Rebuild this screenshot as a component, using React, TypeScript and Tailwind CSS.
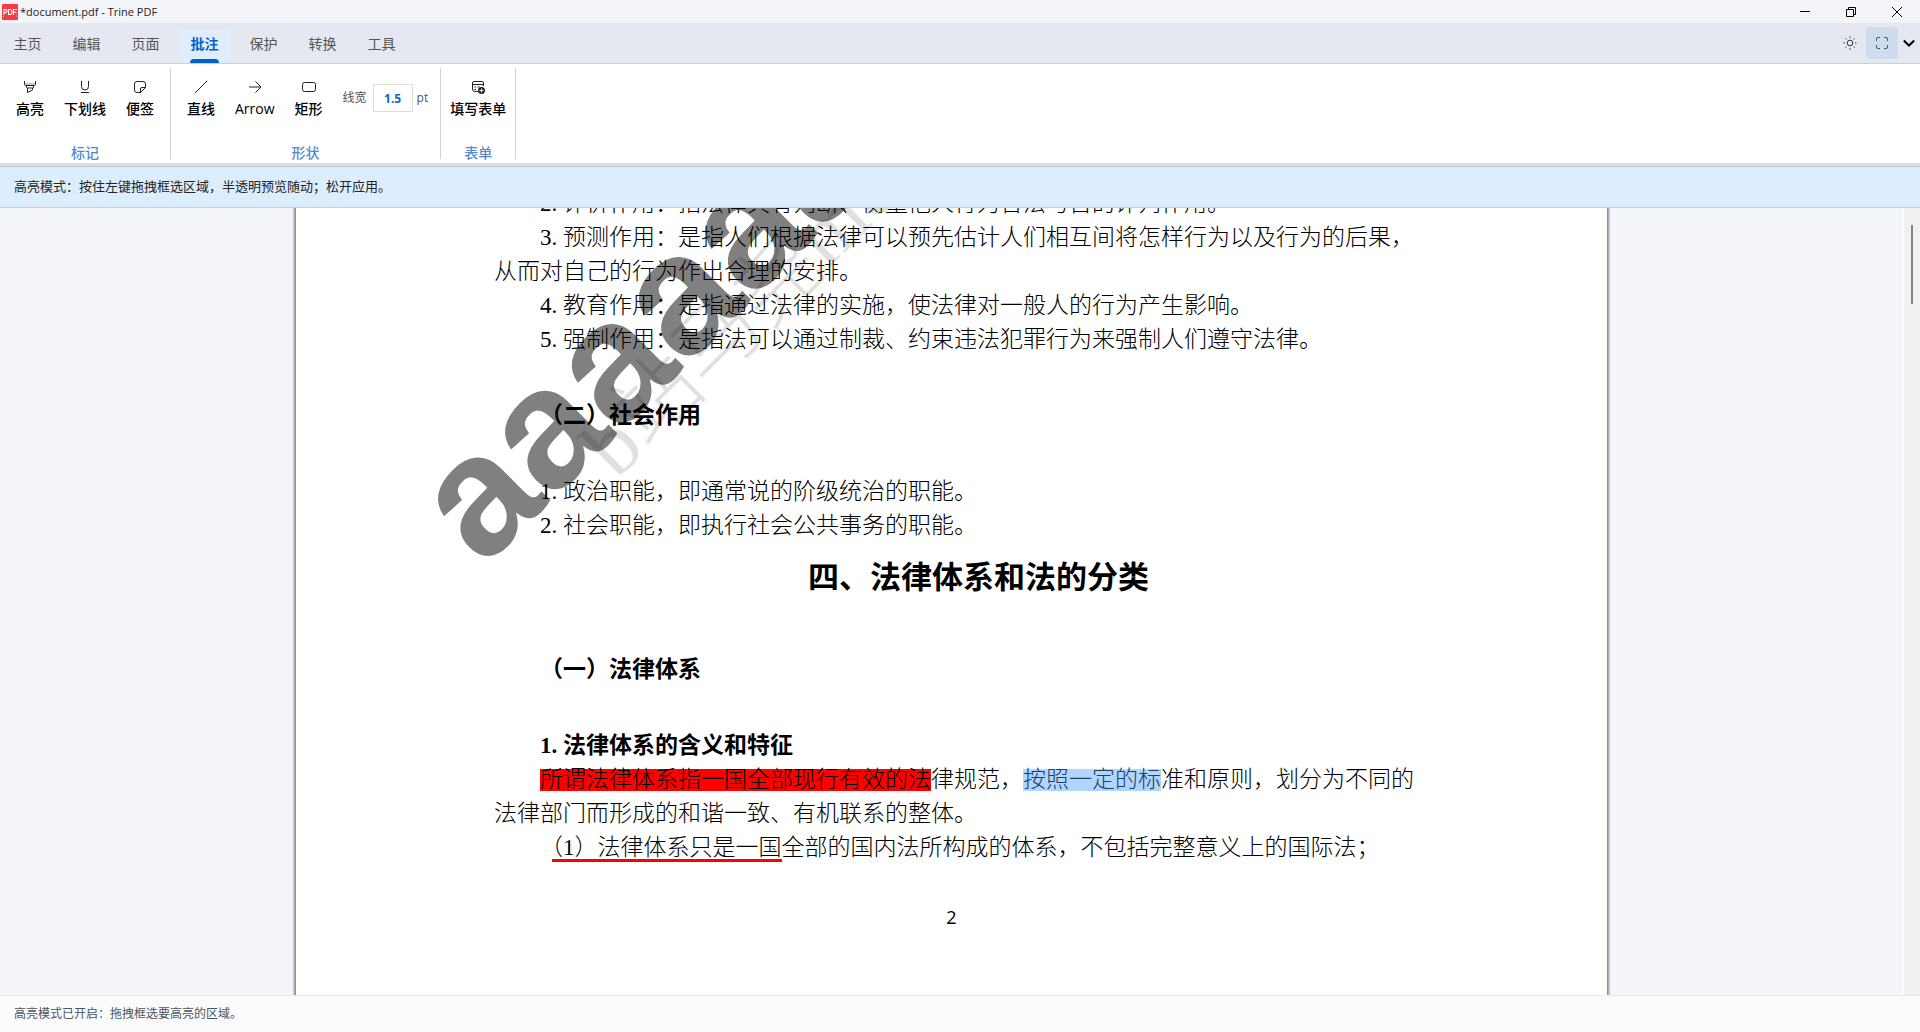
import React, { useState } from 'react';

type IconProps = { className?: string };

const AppIcon = () => (
  <svg viewBox="0 0 16 16" className="size-4 shrink-0" aria-hidden="true">
    <rect width="16" height="16" rx="1" fill="#fb3b41" />
    <g fill="none" stroke="#fff" strokeWidth="1.1">
      <path d="M2 11V5.500h1.500a1.400 1.400 0 0 1 0 3.200H2" />
      <path d="M6.600 5.500v5h1a2.500 2.500 0 0 0 0-5z" />
      <path d="M11.500 11V5.500H15M11.500 8.300h3" />
    </g>
    <path d="M1 12.500h1M14 12h1" stroke="#9ee6ff" />
  </svg>
);

const HighlighterIcon = ({ className }: IconProps) => (
  <svg viewBox="0 0 16 16" className={className} fill="none" stroke="currentColor" strokeWidth="1" aria-hidden="true">
    <path d="M2.500 2v3.500c0 .6.400 1 1 1h9c.6 0 1-.4 1-1V2" />
    <path d="M3 5h10" strokeOpacity=".5" />
    <path d="M4.500 6.500V8c0 .6.400 1 1 1h5c.6 0 1-.4 1-1V6.500M5.500 9v4.500l5-2.500V9" />
  </svg>
);

const UnderlineIcon = ({ className }: IconProps) => (
  <svg viewBox="0 0 16 16" className={className} fill="none" stroke="currentColor" strokeWidth="1" aria-hidden="true">
    <path d="M4.500 2v5.500a3.500 3.500 0 0 0 7 0V2M4 13.500h8" />
  </svg>
);

const NoteIcon = ({ className }: IconProps) => (
  <svg viewBox="0 0 16 16" className={className} fill="none" stroke="currentColor" strokeWidth="1" aria-hidden="true">
    <path d="M8.500 13.500H5A2.500 2.500 0 0 1 2.500 11V5A2.500 2.500 0 0 1 5 2.500h6A2.500 2.500 0 0 1 13.500 5v3.500zM13.500 8.500H10A1.500 1.500 0 0 0 8.500 10v3.500" />
  </svg>
);

const LineIcon = ({ className }: IconProps) => (
  <svg viewBox="0 0 16 16" className={className} fill="none" stroke="currentColor" strokeWidth="1" aria-hidden="true">
    <path d="M2 14 14 2" />
  </svg>
);

const ArrowIcon = ({ className }: IconProps) => (
  <svg viewBox="0 0 16 16" className={className} fill="none" stroke="currentColor" strokeWidth="1" aria-hidden="true">
    <path d="M2 8h12M8.500 2.500 14 8l-5.500 5.500" />
  </svg>
);

const RectIcon = ({ className }: IconProps) => (
  <svg viewBox="0 0 16 16" className={className} fill="none" stroke="currentColor" strokeWidth="1" aria-hidden="true">
    <rect x="1.500" y="3.500" width="13" height="9" rx="2" />
  </svg>
);

const FormIcon = ({ className }: IconProps) => (
  <svg viewBox="0 0 16 16" className={className} fill="none" stroke="currentColor" strokeWidth="1" aria-hidden="true">
    <path d="M8 12.500H5A2.500 2.500 0 0 1 2.500 10V4A1.500 1.500 0 0 1 4 2.500h8A1.500 1.500 0 0 1 13.500 4v3M2.500 5.500h11M4.500 8h1.500M7.500 8h2M4.500 10.500h1.500" />
    <circle cx="11.500" cy="11.500" r="3.500" fill="currentColor" stroke="none" />
    <path d="M11.500 9.500v4M9.500 11.500h4" stroke="#fff" />
  </svg>
);

const SunIcon = () => (
  <svg viewBox="0 0 16 16" className="size-4" fill="none" stroke="#333" aria-hidden="true">
    <circle cx="8" cy="8" r="2.800" />
    <path d="M8 1.500v1.500M8 13v1.500M1.500 8H3M13 8h1.500M3.400 3.400l1.100 1.100M11.500 11.500l1.100 1.100M3.400 12.600l1.100-1.100M11.500 4.500l1.100-1.100" />
  </svg>
);

const FullscreenIcon = () => (
  <svg viewBox="0 0 16 16" className="size-4" fill="none" stroke="#4b5563" aria-hidden="true">
    <path d="M2.500 6V4A1.500 1.500 0 0 1 4 2.500h2M10 2.500h2A1.500 1.500 0 0 1 13.500 4v2M13.500 10v2a1.500 1.500 0 0 1-1.500 1.500h-2M6 13.500H4A1.500 1.500 0 0 1 2.500 12v-2" />
  </svg>
);

const TABS = ['主页', '编辑', '页面', '批注', '保护', '转换', '工具'];

function TitleBar() {
  return (
    <header className="flex h-[23px] shrink-0 items-center bg-[#f4f5f8] pl-0.5 text-black">
      <AppIcon />
      <h1 className="pl-0.5 text-[11px] leading-4 text-[#1b1b1b]">*document.pdf - Trine PDF</h1>
      <div className="ml-auto flex h-full">
        <button aria-label="最小化" className="flex w-[46px] items-center justify-center">
          <svg viewBox="0 0 10 10" className="size-2.5" stroke="#000"><path d="M0 4.500h10" /></svg>
        </button>
        <button aria-label="还原" className="flex w-[46px] items-center justify-center">
          <svg viewBox="0 0 10 10" className="size-2.5" fill="none" stroke="#000"><path d="M.5 2.500h7v7h-7zM2.500 2.500v-2h7v7h-2" /></svg>
        </button>
        <button aria-label="关闭" className="flex w-[46px] items-center justify-center">
          <svg viewBox="0 0 10 10" className="size-2.5" stroke="#000"><path d="M0 0l10 10M10 0 0 10" /></svg>
        </button>
      </div>
    </header>
  );
}

function TabBar({ active, onSelect }: { active: string; onSelect: (t: string) => void }) {
  return (
    <nav className="flex h-[41px] shrink-0 items-end border-b border-[#b9d3ea] bg-[#e5e8f0] pl-px">
      <div className="flex gap-1.5">
        {TABS.map((t) => (
          <button
            key={t}
            onClick={() => onSelect(t)}
            className={
              t === active
                ? 'flex h-[34px] w-[53px] flex-col items-center rounded-t-md bg-[#e0eefb] text-[14px] font-bold text-[#0062cc]'
                : 'flex h-[34px] w-[53px] flex-col items-center text-[14px] text-[#555]'
            }
          >
            <span className="flex h-[30px] items-center leading-5">{t}</span>
            {t === active && <span className="h-1 w-[29px] rounded-t-sm bg-[#0062cc]" />}
          </button>
        ))}
      </div>
      <div className="ml-auto flex h-full items-center">
        <button aria-label="主题" className="flex size-8 items-center justify-center"><SunIcon /></button>
        <button aria-label="全屏" className="flex size-8 items-center justify-center rounded bg-[#cfdcee]"><FullscreenIcon /></button>
        <button aria-label="收起功能区" className="flex h-8 w-[22px] items-center justify-center">
          <svg viewBox="0 0 12 8" className="h-2 w-3" fill="none" stroke="#000" strokeWidth="2"><path d="M.8 1.500 6 6.500l5.200-5" /></svg>
        </button>
      </div>
    </nav>
  );
}

function Tool({ label, Icon }: { label: string; Icon: (p: IconProps) => React.JSX.Element }) {
  return (
    <button className="flex flex-col items-center gap-1 px-2 pt-[11px] text-black">
      <Icon className="size-4 text-[#222]" />
      <span className="text-[14px] leading-5 font-medium">{label}</span>
    </button>
  );
}

function Group({ title, children, tight = false }: { title: string; children: React.ReactNode; tight?: boolean }) {
  return (
    <section
      className={
        tight
          ? 'flex h-[91px] flex-col items-center justify-between border-r border-[#cfd4dc] px-px'
          : 'flex h-[91px] flex-col items-center justify-between border-r border-[#cfd4dc] px-2'
      }
    >
      <div className="flex items-start gap-1">{children}</div>
      <h2 className="text-[14px] leading-3 font-medium text-[#5489c9]">{title}</h2>
    </section>
  );
}

function Ribbon() {
  return (
    <div className="flex h-[99px] shrink-0 items-start bg-white pt-1">
      <Group title="标记">
        <Tool label="高亮" Icon={HighlighterIcon} />
        <Tool label="下划线" Icon={UnderlineIcon} />
        <Tool label="便签" Icon={NoteIcon} />
      </Group>
      <Group title="形状">
        <Tool label="直线" Icon={LineIcon} />
        <Tool label="Arrow" Icon={ArrowIcon} />
        <Tool label="矩形" Icon={RectIcon} />
        <div className="flex items-center pt-4 pr-1 pl-2 text-[12px] text-[#555]">
          <label htmlFor="line-width">线宽</label>
          <input
            id="line-width"
            defaultValue="1.5"
            className="mr-1 ml-1.5 h-7 w-10 border border-[#dcdcdc] bg-white text-center text-[12px] font-bold text-[#0a66cc]"
          />
          <span>pt</span>
        </div>
      </Group>
      <Group title="表单" tight>
        <Tool label="填写表单" Icon={FormIcon} />
      </Group>
    </div>
  );
}

const Num = ({ n }: { n: number }) => <span className="inline-block w-[23px]">{n}.</span>;

function Para({ children, flush = false }: { children: React.ReactNode; flush?: boolean }) {
  return <p className={flush ? 'h-[34px] whitespace-nowrap' : 'h-[34px] pl-[46px] whitespace-nowrap'}>{children}</p>;
}

function Watermarks() {
  return (
    <div aria-hidden="true" className="pointer-events-none select-none">
      <span className="absolute top-[230px] left-[206px] origin-bottom-left -rotate-45 font-['Liberation_Sans',sans-serif] text-[170px] leading-[170px] font-bold text-[#808080]">
        aaaaaa
      </span>
      <span className="absolute top-[218px] left-[331px] origin-bottom-left -rotate-45 font-['Liberation_Serif','Noto_Sans_CJK_SC',serif] text-[85px] leading-[85px] font-light whitespace-nowrap text-black/12">
        b站马尧mc
      </span>
    </div>
  );
}

function Page() {
  return (
    <article className="relative -mt-[21px] w-[1311px] shrink-0 self-start bg-white shadow-[0_0_2px_2px_#8a8a8a]">
      <Watermarks />
      <div className="relative px-[198px] pb-[110px] font-['Liberation_Serif','Noto_Sans_CJK_SC',serif] text-[23px] leading-[34px] font-light text-black">
        <Para><Num n={2} />评价作用：指法律具有判断、衡量他人行为合法与否的评判作用。</Para>
        <Para><Num n={3} />预测作用：是指人们根据法律可以预先估计人们相互间将怎样行为以及行为的后果，</Para>
        <Para flush>从而对自己的行为作出合理的安排。</Para>
        <Para><Num n={4} />教育作用：是指通过法律的实施，使法律对一般人的行为产生影响。</Para>
        <Para><Num n={5} />强制作用：是指法可以通过制裁、约束违法犯罪行为来强制人们遵守法律。</Para>
        <h3 className="mt-[42px] mb-[42px] pl-[46px] font-bold">（二）社会作用</h3>
        <Para><Num n={1} />政治职能，即通常说的阶级统治的职能。</Para>
        <Para><Num n={2} />社会职能，即执行社会公共事务的职能。</Para>
        <h2 className="mt-[18px] pl-[54px] text-center text-[31px] font-bold">四、法律体系和法的分类</h2>
        <h3 className="mt-[58px] mb-[42px] pl-[46px] font-bold">（一）法律体系</h3>
        <h4 className="h-[34px] pl-[46px] font-bold"><Num n={1} />法律体系的含义和特征</h4>
        <Para>
          <mark className="inline-block bg-[#ff0000] leading-[22px] text-black">所谓法律体系指一国全部现行有效的法</mark>
          律规范，
          <mark className="inline-block bg-[#b0d6ff] leading-[22px] text-[#1c4166]">按照一定的标</mark>
          准和原则，划分为不同的
        </Para>
        <Para flush>法律部门而形成的和谐一致、有机联系的整体。</Para>
        <Para>
          <u className="relative inline-block leading-[22px] no-underline after:absolute after:-bottom-[3px] after:right-0 after:left-3 after:h-[3px] after:bg-[#f00] after:content-['']">
            （1）法律体系只是一国
          </u>
          全部的国内法所构成的体系，不包括完整意义上的国际法；
        </Para>
        <footer className="mt-[35px] text-center font-['Open_Sans',sans-serif] text-[18px] font-medium">2</footer>
      </div>
    </article>
  );
}

export default function App() {
  const [tab, setTab] = useState('批注');
  return (
    <div lang="zh-CN" className="flex h-screen flex-col overflow-hidden bg-[#f4f5f8] font-['Open_Sans','Noto_Sans_CJK_SC',sans-serif]">
      <TitleBar />
      <TabBar active={tab} onSelect={setTab} />
      <Ribbon />
      <div className="flex h-[45px] shrink-0 flex-col border-b border-[#b5d3ec] bg-[#dceefd]">
        <div className="h-1 shrink-0 border-b border-[#c3c8cf] bg-[#dbdee3]" />
        <p className="flex grow items-center pl-3.5 text-[13px] text-[#222]">高亮模式：按住左键拖拽框选区域，半透明预览随动；松开应用。</p>
      </div>
      <div className="flex min-h-0 flex-1">
        <main className="flex grow justify-center overflow-hidden">
          <Page />
        </main>
        <div className="flex w-[17px] shrink-0 justify-center border-l border-white bg-[#f0f0f0] pt-[17px]">
          <div className="h-[79px] w-0.5 bg-[#858585]" />
        </div>
      </div>
      <footer className="flex h-[37px] shrink-0 items-center border-t border-[#e8eaee] bg-[#fafbfd] pl-3.5 text-[12px] text-[#4b5563]">
        高亮模式已开启：拖拽框选要高亮的区域。
      </footer>
    </div>
  );
}
